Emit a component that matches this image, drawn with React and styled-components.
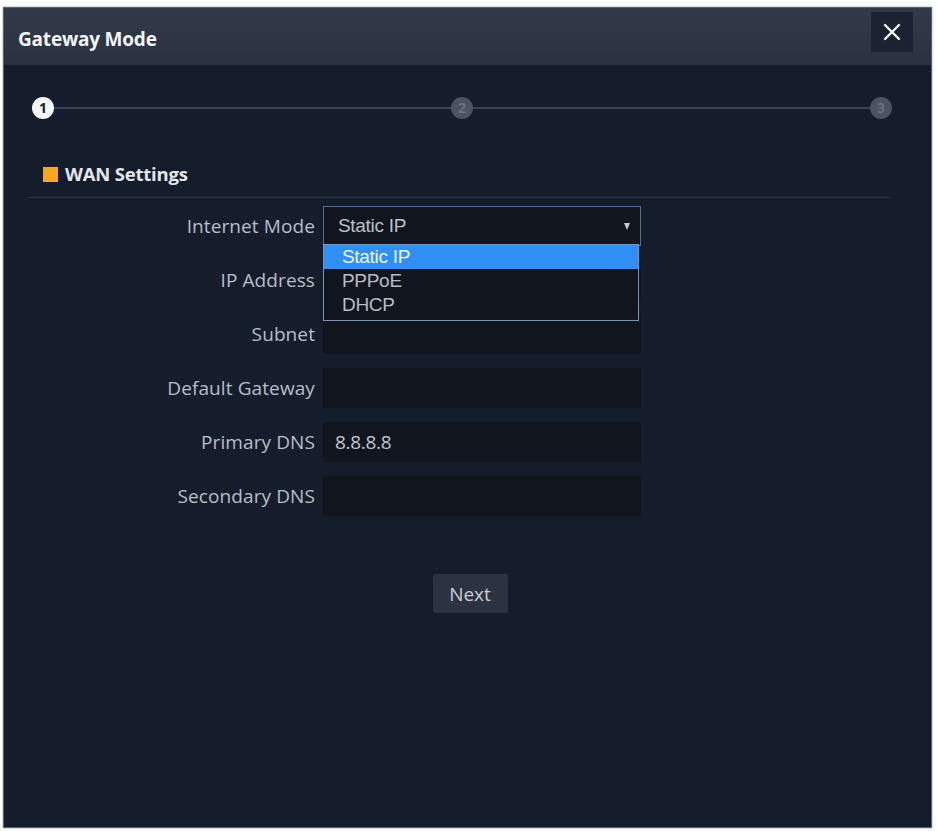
import React from "react";
import styled, { createGlobalStyle } from "styled-components";

const Global = createGlobalStyle`
  html, body { margin: 0; padding: 0; background: #ffffff; }
  body { font-family: "Open Sans", "Noto Sans", sans-serif; }
  #root { width: 937px; height: 831px; }
`;

const Page = styled.div`
  width: 937px;
  height: 831px;
  padding: 7px 5px 3px 3px;
  box-sizing: border-box;
  background: #ffffff;
`;

const Dialog = styled.div`
  height: 100%;
  display: flex;
  flex-direction: column;
  background: #151d2c;
  border: 1px solid #5a6270;
  box-sizing: border-box;
  box-shadow: 0 0 2px rgba(0,0,0,0.4);
`;

const Header = styled.div`
  height: 57px;
  flex: none;
  display: flex;
  align-items: center;
  justify-content: space-between;
  padding: 0 18px 0 14px;
  background: linear-gradient(#323a4a, #2a3141);
`;

const Title = styled.div`
  color: #f2f4f7;
  font-weight: 700;
  font-size: 19px;
  letter-spacing: -0.2px;
  margin-top: 4px;
`;

const CloseBtn = styled.button`
  width: 42px;
  height: 40px;
  margin-top: -10px;
  border: none;
  background: #1b2231;
  display: flex;
  align-items: center;
  justify-content: center;
  padding: 0;
  cursor: pointer;
`;

const Body = styled.div`
  flex: 1;
  display: flex;
  flex-direction: column;
`;

const Stepper = styled.div`
  display: flex;
  align-items: center;
  padding: 27px 39px 0 28px;
  height: 32px;
`;

const StepDot = styled.div`
  width: 22px;
  height: 22px;
  border-radius: 50%;
  flex: none;
  background: ${p => (p.$active ? "#f4f5f7" : "#4b5361")};
  color: ${p => (p.$active ? "#1a2130" : "#69717f")};
  font-size: 14px;
  font-weight: 700;
  display: flex;
  align-items: center;
  justify-content: center;
  line-height: 1;
`;

const StepLine = styled.div`
  flex: 1;
  height: 2px;
  background: #3b4453;
`;

const Section = styled.div`
  margin: 39px 41px 0 24px;
  border-bottom: 1px solid #2d3544;
  padding: 0 0 12px 15px;
  display: flex;
  align-items: center;
  gap: 7px;
`;

const Marker = styled.span`
  width: 15px;
  height: 15px;
  background: #f5a623;
  display: inline-block;
`;

const SectionTitle = styled.span`
  color: #e3e6ea;
  font-weight: 700;
  font-size: 18.5px;
  line-height: 22px;
  letter-spacing: -0.2px;
`;

const Form = styled.div`
  display: flex;
  flex-direction: column;
  gap: 14px;
  margin-top: 8px;
`;

const Row = styled.div`
  display: grid;
  grid-template-columns: 311px 318px;
  column-gap: 8px;
  align-items: center;
  height: 40px;
`;

const Label = styled.div`
  text-align: right;
  color: #b9bec7;
  font-size: 19px;
  letter-spacing: 0.1px;
`;

const Input = styled.div`
  height: 40px;
  background: #10151e;
  color: #c2c6cd;
  font-size: 19px;
  display: flex;
  align-items: center;
  padding-left: 12px;
  box-sizing: border-box;
  letter-spacing: -0.3px;
`;

const SelectWrap = styled.div`
  position: relative;
  height: 40px;
`;

const SelectBox = styled.div`
  height: 40px;
  box-sizing: border-box;
  border: 1px solid #4e6f9c;
  background: #10151e;
  display: flex;
  align-items: center;
  justify-content: space-between;
  padding: 0 10px 0 14px;
  color: #bcc1c9;
  font-family: "Liberation Sans", Arial, sans-serif;
  font-size: 19px;
  letter-spacing: -0.3px;
`;

const Caret = styled.span`
  width: 0;
  height: 0;
  border-left: 3.5px solid transparent;
  border-right: 3.5px solid transparent;
  border-top: 7px solid #c6cad1;
`;

const Menu = styled.div`
  position: absolute;
  left: 0;
  top: 38px;
  width: 316px;
  background: #10151e;
  border: 1px solid #7d93b3;
  box-sizing: border-box;
  padding-bottom: 3px;
  z-index: 2;
`;

const Option = styled.div`
  height: 24px;
  line-height: 24px;
  padding-left: 18px;
  font-family: "Liberation Sans", Arial, sans-serif;
  font-size: 19px;
  letter-spacing: -0.3px;
  color: ${p => (p.$selected ? "#eef4ff" : "#b7bcc4")};
  background: ${p => (p.$selected ? "#2f8ff5" : "transparent")};
`;

const Actions = styled.div`
  display: flex;
  justify-content: center;
  margin-top: 58px;
  padding-left: 5px;
`;

const NextBtn = styled.button`
  width: 75px;
  height: 39px;
  border: none;
  border-radius: 3px;
  background: #2b3343;
  color: #c9cdd4;
  font-family: "Open Sans", sans-serif;
  font-size: 19px;
  cursor: pointer;
`;

const fields = [
  { label: "IP Address", value: "" },
  { label: "Subnet", value: "" },
  { label: "Default Gateway", value: "" },
  { label: "Primary DNS", value: "8.8.8.8" },
  { label: "Secondary DNS", value: "" },
];

export default function App() {
  return (
    <>
      <Global />
      <Page>
        <Dialog>
          <Header>
            <Title>Gateway Mode</Title>
            <CloseBtn aria-label="close">
              <svg width="18" height="18" viewBox="0 0 18 18">
                <path d="M2 2 L16 16 M16 2 L2 16" stroke="#f2f4f7" strokeWidth="2.4" strokeLinecap="round" />
              </svg>
            </CloseBtn>
          </Header>
          <Body>
            <Stepper>
              <StepDot $active>1</StepDot>
              <StepLine />
              <StepDot>2</StepDot>
              <StepLine />
              <StepDot>3</StepDot>
            </Stepper>
            <Section>
              <Marker />
              <SectionTitle>WAN Settings</SectionTitle>
            </Section>
            <Form>
              <Row>
                <Label>Internet Mode</Label>
                <SelectWrap>
                  <SelectBox>
                    <span>Static IP</span>
                    <Caret />
                  </SelectBox>
                  <Menu>
                    <Option $selected>Static IP</Option>
                    <Option>PPPoE</Option>
                    <Option>DHCP</Option>
                  </Menu>
                </SelectWrap>
              </Row>
              {fields.map(f => (
                <Row key={f.label}>
                  <Label>{f.label}</Label>
                  <Input>{f.value}</Input>
                </Row>
              ))}
            </Form>
            <Actions>
              <NextBtn>Next</NextBtn>
            </Actions>
          </Body>
        </Dialog>
      </Page>
    </>
  );
}
